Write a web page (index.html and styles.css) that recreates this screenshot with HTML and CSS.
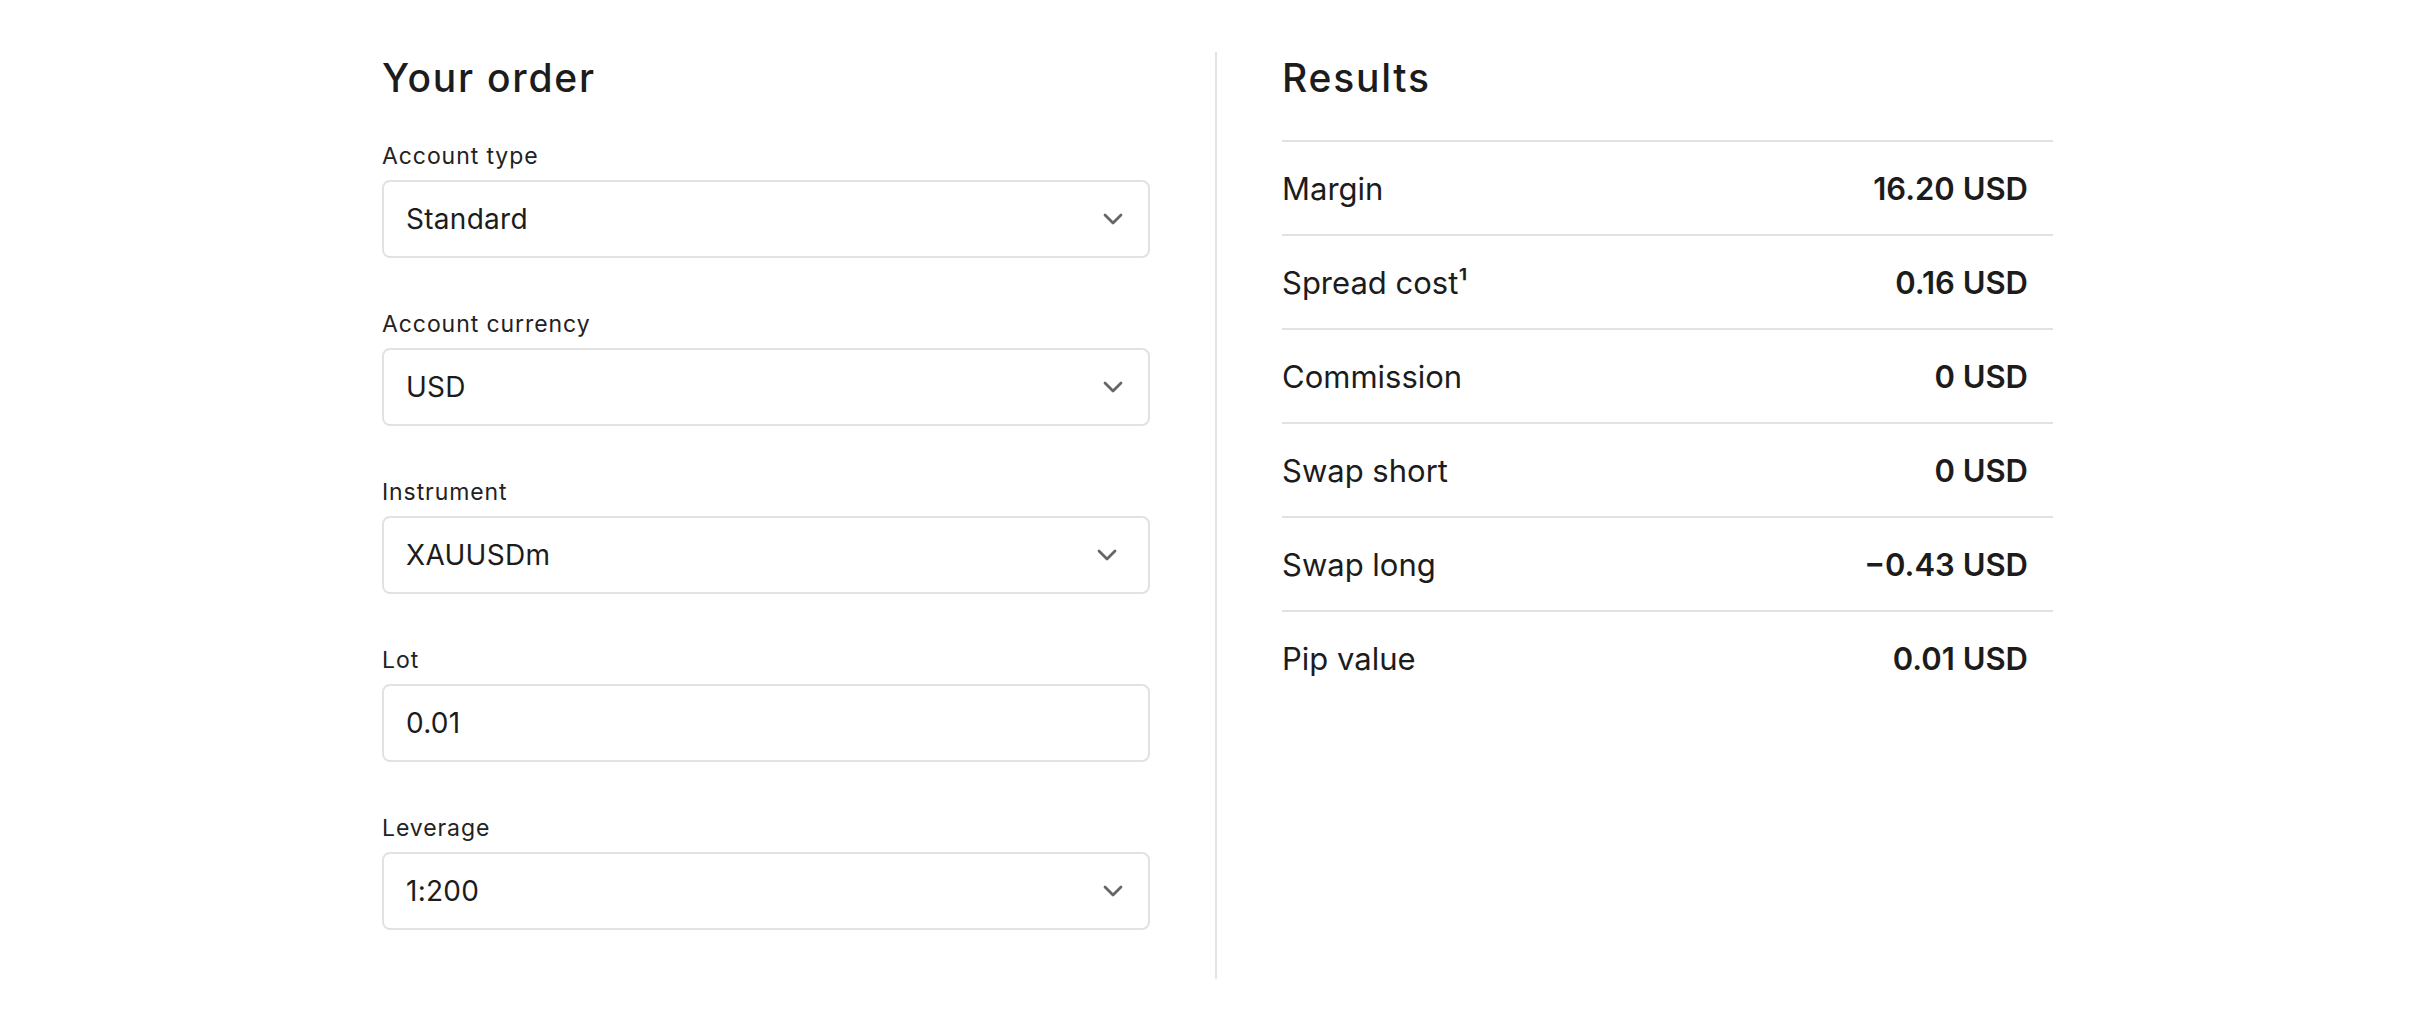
FILE: index.html
```html
<!DOCTYPE html>
<html lang="en">
<head>
    <meta charset="UTF-8">
    <meta name="viewport" content="width=device-width, initial-scale=1.0">
    <title>Trading Calculator</title>
    <link rel="stylesheet" href="styles.css">
</head>
<body>
    <div class="calculator">
        <div class="order-section">
            <h2 class="section-title">Your order</h2>
            <div class="field">
                <div class="field-label">Account type</div>
                <div class="select-box">
                    <span class="select-value">Standard</span>
                    <svg class="chevron" viewBox="0 0 20 12" width="20" height="12"><path d="M2 2 L10 10 L18 2" /></svg>
                </div>
            </div>
            <div class="field">
                <div class="field-label">Account currency</div>
                <div class="select-box">
                    <span class="select-value">USD</span>
                    <svg class="chevron" viewBox="0 0 20 12" width="20" height="12"><path d="M2 2 L10 10 L18 2" /></svg>
                </div>
            </div>
            <div class="field">
                <div class="field-label">Instrument</div>
                <div class="select-box search-box">
                    <span class="select-value">XAUUSDm</span>
                    <svg class="chevron" viewBox="0 0 20 12" width="20" height="12"><path d="M2 2 L10 10 L18 2" /></svg>
                </div>
            </div>
            <div class="field">
                <div class="field-label">Lot</div>
                <input class="text-input" type="text" value="0.01">
            </div>
            <div class="field">
                <div class="field-label">Leverage</div>
                <div class="select-box">
                    <span class="select-value">1:200</span>
                    <svg class="chevron" viewBox="0 0 20 12" width="20" height="12"><path d="M2 2 L10 10 L18 2" /></svg>
                </div>
            </div>
        </div>
        <div class="divider"></div>
        <div class="results-section">
            <h2 class="section-title">Results</h2>
            <div class="results-list">
                <div class="result-row">
                    <span class="result-name">Margin</span>
                    <span class="result-value">16.20 USD</span>
                </div>
                <div class="result-row">
                    <span class="result-name">Spread cost¹</span>
                    <span class="result-value">0.16 USD</span>
                </div>
                <div class="result-row">
                    <span class="result-name">Commission</span>
                    <span class="result-value">0 USD</span>
                </div>
                <div class="result-row">
                    <span class="result-name">Swap short</span>
                    <span class="result-value">0 USD</span>
                </div>
                <div class="result-row">
                    <span class="result-name">Swap long</span>
                    <span class="result-value">−0.43 USD</span>
                </div>
                <div class="result-row">
                    <span class="result-name">Pip value</span>
                    <span class="result-value">0.01 USD</span>
                </div>
            </div>
        </div>
    </div>
</body>
</html>
```

FILE: styles.css
```css
body {
    margin: 0;
    padding: 52px 0 0 382px;
    font-family: Inter, "Noto Sans", sans-serif;
    color: #1c1c1c;
    background-color: #fff;
}
.calculator {
    display: flex;
    gap: 65px;
}
.order-section {
    width: 768px;
    padding-top: 3px;
}
.divider {
    width: 2px;
    height: 927px;
    background-color: #e4e4e4;
}
.results-section {
    width: 771px;
    padding-top: 3px;
}
.section-title {
    margin: 0 0 40px 0;
    font-size: 39px;
    font-weight: 500;
    line-height: 46px;
    letter-spacing: 0.045em;
}
.results-section .section-title {
    margin-bottom: 39px;
}
.field {
    margin-bottom: 51px;
}
.field-label {
    font-size: 23px;
    line-height: 31px;
    letter-spacing: 0.04em;
    margin-bottom: 8px;
    color: #222;
}
.select-box, .text-input {
    display: flex;
    align-items: center;
    justify-content: space-between;
    height: 78px;
    box-sizing: border-box;
    width: 100%;
    padding: 0 25px 0 22px;
    border: 2px solid #e2e2e2;
    border-radius: 8px;
    font-family: Inter, "Noto Sans", sans-serif;
    font-size: 28px;
    letter-spacing: 0.01em;
    color: #1c1c1c;
    background-color: #fff;
}
.search-box {
    padding-right: 31px;
}
.text-input {
    outline: none;
}
.select-value {
    line-height: 34px;
}
.chevron {
    fill: none;
    stroke: #666;
    stroke-width: 2.8;
    stroke-linecap: round;
    stroke-linejoin: round;
}
.result-row {
    display: flex;
    justify-content: space-between;
    align-items: center;
    height: 92px;
    border-top: 2px solid #e2e2e2;
    padding-right: 25px;
}
.result-name {
    font-size: 31px;
}
.result-value {
    font-size: 31px;
    font-weight: 600;
}
```
